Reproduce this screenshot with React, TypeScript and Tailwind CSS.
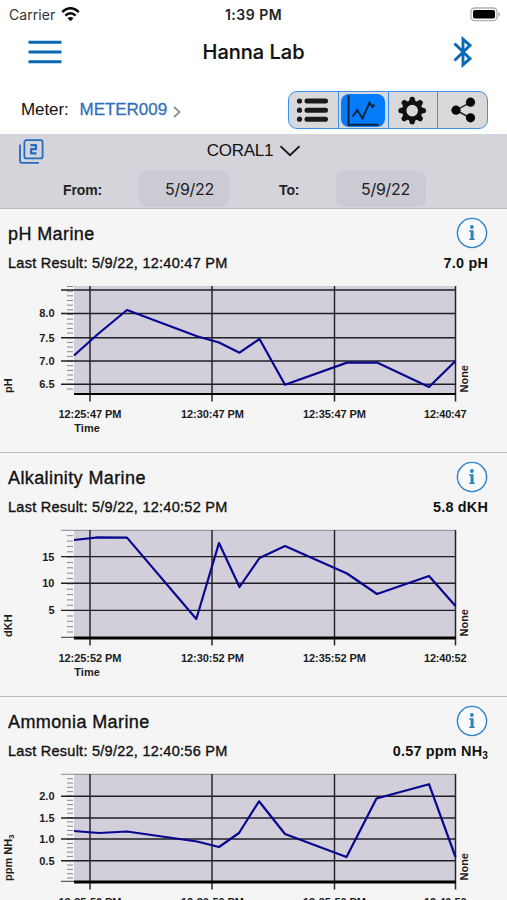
import type { ReactNode } from 'react';

type Tick = { y: number; label?: string };

type ChartData = {
  id: string;
  title: string;
  lastResult: string;
  value: ReactNode;
  unit: ReactNode;
  top: number;
  bottom: number;
  axisWidth: number;
  ticks: Tick[];
  minor: number[];
  times: string[];
  points: string;
};

const GRID_X = [90, 212, 334.5, 455.5];

function range(from: number, to: number, count: number) {
  return Array.from({ length: count }, (_, i) => from + ((to - from) * i) / (count - 1));
}

const CHARTS: ChartData[] = [
  {
    id: 'ph',
    title: 'pH Marine',
    lastResult: '5/9/22, 12:40:47 PM',
    value: '7.0 pH',
    unit: 'pH',
    top: 6,
    bottom: 114,
    axisWidth: 2,
    ticks: [{ y: 10 }, { y: 33.5, label: '8.0' }, { y: 57.7, label: '7.5' }, { y: 81, label: '7.0' }, { y: 104.3, label: '6.5' }],
    minor: range(6.5, 109, 23),
    times: ['12:25:47 PM', '12:30:47 PM', '12:35:47 PM', '12:40:47'],
    points: '74,75.5 98,54 127,30 197,56.3 219,62.5 239.5,72.7 259.5,59 285,104.8 347,82.6 377,82.6 429,107 455.5,81',
  },
  {
    id: 'alkalinity',
    title: 'Alkalinity Marine',
    lastResult: '5/9/22, 12:40:52 PM',
    value: '5.8 dKH',
    unit: 'dKH',
    top: 6,
    bottom: 114,
    axisWidth: 3,
    ticks: [{ y: 6.3 }, { y: 32.6, label: '15' }, { y: 59.3, label: '10' }, { y: 86.4, label: '5' }],
    minor: range(11.7, 108, 19),
    times: ['12:25:52 PM', '12:30:52 PM', '12:35:52 PM', '12:40:52'],
    points: '74,16 98,13.4 127,13.6 196.3,95 219,19 239.5,63 259.5,34 285,22 347,49.5 377,70 429,52 455.5,82',
  },
  {
    id: 'ammonia',
    title: 'Ammonia Marine',
    lastResult: '5/9/22, 12:40:56 PM',
    value: (<>0.57 ppm NH<sub className="bottom-[-3px] text-[10px]">3</sub></>),
    unit: (<>ppm NH<tspan dy="2" fontSize="7.5">3</tspan></>),
    top: 6,
    bottom: 114,
    axisWidth: 3,
    ticks: [{ y: 6.3 }, { y: 28.2, label: '2.0' }, { y: 50, label: '1.5' }, { y: 71, label: '1.0' }, { y: 92.8, label: '0.5' }],
    minor: range(10.7, 110, 24),
    times: ['12:25:56 PM', '12:30:56 PM', '12:35:56 PM', '12:40:56'],
    points: '74,63 99,65 127,63.5 197,73.5 219,79 239,65 259,33.3 285,66 346.5,89 376.5,30.5 429,16.2 455.5,89',
  },
];

function InfoIcon() {
  return (
    <svg className="h-8 w-8" viewBox="0 0 32 32">
      <circle cx="16" cy="16" r="14.6" fill="#f8fafc" stroke="#2b83c6" strokeWidth="1.4" />
      <circle cx="15.9" cy="10" r="1.9" fill="#2b83c6" />
      <path d="M13.2 13.2h4.4v8.5h1.2V23h-5.6v-1.3h1.4v-7h-1.4z" fill="#2b83c6" />
    </svg>
  );
}

function Chart({ data }: { data: ChartData }) {
  const { top, bottom, ticks, minor, times, points, axisWidth, unit } = data;
  return (
    <svg className="block h-[171px] w-[507px]" viewBox="0 0 507 171" fontFamily="'Liberation Sans', Arial, sans-serif" fontWeight="700" fontSize="11" fill="#1c1c1c">
      <rect x="74" y={top} width="381.5" height={bottom - top} fill="#d2cfda" />
      {minor.map((y) => (
        <line key={y} x1="67" x2="73" y1={y} y2={y} stroke="#858585" strokeWidth="1" />
      ))}
      {ticks.map((t) => (
        <g key={t.y}>
          {t.y < 8 ? (
            <line x1="61" x2="455.5" y1={t.y} y2={t.y} stroke="#8b8a90" strokeWidth="1" />
          ) : (
            <line x1="61" x2="455.5" y1={t.y} y2={t.y} stroke="#1f1e24" strokeWidth="1.4" />
          )}
          {t.label && <text x="54.5" y={t.y + 3.9} textAnchor="end">{t.label}</text>}
        </g>
      ))}
      {axisWidth > 2 && <line x1="61" x2="74" y1={bottom - 0.7} y2={bottom - 0.7} stroke="#333" strokeWidth="1" />}
      {GRID_X.map((x) => (
        <line key={x} x1={x} x2={x} y1={top} y2={bottom + 7.5} stroke="#26252b" strokeWidth="1.5" />
      ))}
      <line x1="74" x2="455.5" y1={bottom} y2={bottom} stroke="#000" strokeWidth={axisWidth} />
      <polyline points={points} fill="none" stroke="#07078f" strokeWidth="2.2" strokeLinejoin="round" />
      {times.map((t, i) => (
        <text key={t} x={[58.5, 181, 303, 424][i]} y="138.3" textLength={i === 3 ? 42.5 : 63}>{t}</text>
      ))}
      <text x="74.3" y="151.7" textLength="25.5">Time</text>
      <text transform="translate(12 113) rotate(-90)">{unit}</text>
      <text transform="translate(467.8 112.5) rotate(-90)" textLength="27.5">None</text>
    </svg>
  );
}

function ResultSection({ data }: { data: ChartData }) {
  return (
    <section className="h-[244px] border-t border-[#bdbdc1] bg-[#f5f5f6]">
      <div className="flex h-12 items-center justify-between pr-[19px] pl-2">
        <h2 className="pt-[3px] text-[18px] tracking-[0.4px] [-webkit-text-stroke:0.35px_#111]">{data.title}</h2>
        <InfoIcon />
      </div>
      <div className="flex h-[23px] items-start justify-between pr-[19px] pl-2 text-[14.4px] leading-[12px]">
        <p className="text-[14.5px] tracking-[0.26px] [-webkit-text-stroke:0.35px_#111]">Last Result: {data.lastResult}</p>
        <p className="tracking-[0.2px] font-bold">{data.value}</p>
      </div>
      <Chart data={data} />
    </section>
  );
}

function ListIcon() {
  return (
    <svg className="h-9 w-12" viewBox="0 0 48 36" fill="#1b1b1d">
      {[9, 18.2, 27.2].map((y) => (
        <g key={y}>
          <circle cx="10.5" cy={y} r="2.6" />
          <rect x="15.5" y={y - 2.5} width="23.5" height="5" rx="2.2" />
        </g>
      ))}
    </svg>
  );
}

function TrendIcon() {
  return (
    <svg className="h-[33px] w-11 rounded-lg bg-[#047bfb]" viewBox="0 0 44 33" fill="none" stroke="#102139">
      <path d="M7.5 1.5v29.3h30" strokeWidth="2" />
      <path d="M11.5 22.5l4.7-6.2 5.3 8 7-15.5 3 4 2-2.3" strokeWidth="2" />
    </svg>
  );
}

function GearIcon() {
  return (
    <svg className="h-9 w-12" viewBox="-23.2 -18.6 48 36">
      <circle r="8" fill="none" stroke="#111" strokeWidth="4.4" />
      {[0, 45, 90, 135, 180, 225, 270, 315].map((a) => (
        <path key={a} d="M-3.5-8.7L-2.2-13.2Q0-14.6 2.2-13.2L3.5-8.7z" fill="#111" transform={`rotate(${a})`} />
      ))}
    </svg>
  );
}

function ShareIcon() {
  return (
    <svg className="h-9 w-12" viewBox="0 0 48 36" fill="#050505">
      <path d="M31.5 10.4L17 18.2l14.5 7.8" fill="none" stroke="#222" strokeWidth="1.5" />
      <circle cx="17" cy="18.2" r="4.6" />
      <circle cx="31.5" cy="10.2" r="4.6" />
      <circle cx="31.5" cy="25.8" r="4.6" />
    </svg>
  );
}

function StatusBar() {
  return (
    <div className="grid h-7 grid-cols-3 items-center font-['Inter',sans-serif] text-[14px]">
      <div className="flex items-center gap-1.5 pl-[9px]">
        <span className="text-[14px] tracking-[0.05px] text-[#333]">Carrier</span>
        <svg className="h-[15px] w-[19px]" viewBox="0 0 19 15" fill="none" stroke="#080808" strokeWidth="2.5">
          <path d="M1.3 5.2C6-.1 13-.1 17.7 5.2" />
          <path d="M4.4 8.6c3-3.2 7.2-3.2 10.2 0" />
          <path d="M6.5 11.3c1.8-1.7 4.2-1.7 6 0l-3 3z" fill="#080808" stroke="none" />
        </svg>
      </div>
      <p className="text-center font-semibold tracking-[0.5px] text-[#222]">1:39 PM</p>
      <div className="flex justify-end pr-[6px]">
        <svg className="h-[15px] w-[31px]" viewBox="0 0 31 15">
          <rect x="1" y="1" width="26" height="12.6" rx="3.6" fill="#fff" stroke="#b0b0b0" strokeWidth="1.3" />
          <rect x="3" y="3" width="22" height="8.6" rx="1.8" fill="#000" />
          <path d="M28.5 5c1.7.7 1.7 4 0 4.7z" fill="#999" />
        </svg>
      </div>
    </div>
  );
}

function Header() {
  return (
    <header>
      <StatusBar />
      <div className="grid h-[48px] grid-cols-3 items-center">
        <svg className="ml-7 h-[26px] w-[34px]" viewBox="0 0 34 26" stroke="#0b67b2" strokeWidth="3">
          <path d="M.5 3.2h33M.5 13h33M.5 22.7h33" />
        </svg>
        <h1 className="text-center font-['Inter',sans-serif] text-[20px] font-medium whitespace-nowrap [-webkit-text-stroke:0.2px_#111]">Hanna Lab</h1>
        <svg className="mr-[34px] h-8 w-5 justify-self-end" viewBox="0 0 20 32" fill="none" stroke="#0b69b8" strokeWidth="2.9">
          <path d="M1.5 7.5L17 22.7l-7 6.2V3.1l7 6.2L1.5 24.5" />
        </svg>
      </div>
      <div className="flex h-[58px] items-start justify-between pt-[15px] pr-[19px] pl-[21px]">
        <div className="flex h-[38px] items-center text-[17px]">
          <span className="tracking-[-0.1px]">Meter:</span>
          <span className="ml-[11px] text-[17px] tracking-[-0.05px] text-[#3370ba] [-webkit-text-stroke:0.3px_#3370ba]">METER009</span>
          <svg className="mt-1 ml-[6px] h-3 w-2" viewBox="0 0 8 12" fill="none" stroke="#929292" strokeWidth="2">
            <path d="M1 1l5.5 5L1 11" />
          </svg>
        </div>
        <div className="flex h-[38px] w-[200px] divide-x divide-[#3b91f1] overflow-hidden rounded-[9px] border-[1.5px] border-[#3b91f1] bg-[#d9d9db]">
          <button className="flex flex-1 items-center justify-center"><ListIcon /></button>
          <button className="flex flex-1 items-center justify-center"><TrendIcon /></button>
          <button className="flex flex-1 items-center justify-center"><GearIcon /></button>
          <button className="flex flex-1 items-center justify-center"><ShareIcon /></button>
        </div>
      </div>
    </header>
  );
}

function FilterBar() {
  return (
    <div className="h-[74px] bg-[#d5d4db]">
      <div className="grid h-[36px] grid-cols-[1fr_auto_1fr] items-center">
        <svg className="ml-[18px] h-[26px] w-[26px]" viewBox="0 0 26 26" fill="none" stroke="#236cc0" strokeWidth="1.8">
          <rect x="6.4" y="1.2" width="18.2" height="18.2" rx="2" />
          <path d="M2 5.5v16.3q0 2 2 2h17" />
          <path d="M12.5 6.2h5.4v4h-4.8v4.2h5.4" strokeWidth="2.3" strokeLinejoin="round" />
        </svg>
        <div className="flex items-center gap-[7px] pb-[3px]">
          <span className="text-[17px] tracking-[-0.25px]">CORAL1</span>
          <svg className="h-3 w-5" viewBox="0 0 20 12" fill="none" stroke="#151515" strokeWidth="1.8">
            <path d="M.5 1.2l9.5 9 9.5-9" />
          </svg>
        </div>
      </div>
      <div className="flex h-[37px] items-center pl-[63px] text-[14px]">
        <span className="w-[76px] pt-[3px] font-bold tracking-[-0.1px] text-[#222]">From:</span>
        <span className="h-9 w-[90px] rounded-lg bg-[#cccbd3] pl-[26px] font-['Inter',sans-serif] text-[16px] leading-[37px] tracking-[-0.3px] text-[#202024]">5/9/22</span>
        <span className="ml-[50px] w-[57px] pt-[3px] font-bold tracking-[-0.1px] text-[#222]">To:</span>
        <span className="h-9 w-[90px] rounded-lg bg-[#cccbd3] pl-[25px] font-['Inter',sans-serif] text-[16px] leading-[37px] tracking-[-0.3px] text-[#202024]">5/9/22</span>
      </div>
    </div>
  );
}

export default function App() {
  return (
    <div className="h-[900px] w-[507px] overflow-hidden bg-white font-['Liberation_Sans',Arial,sans-serif] text-[#111]">
      <Header />
      <FilterBar />
      {CHARTS.map((c) => (
        <ResultSection key={c.id} data={c} />
      ))}
    </div>
  );
}
